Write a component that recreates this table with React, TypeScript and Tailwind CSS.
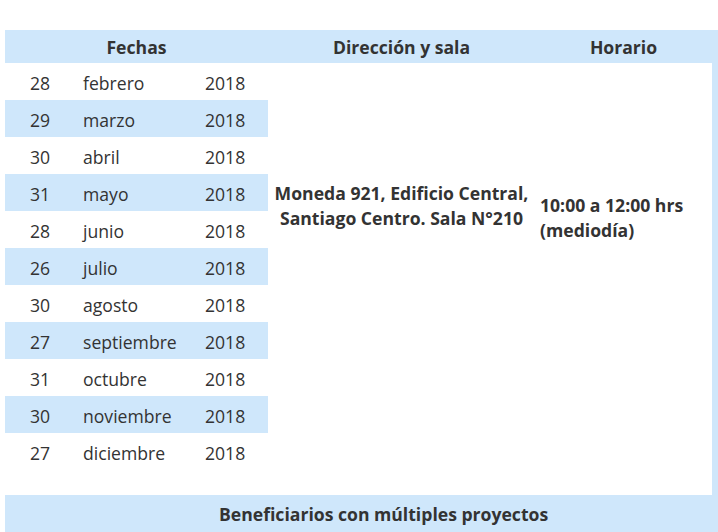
import React from 'react';

const rows = [
  { day: '28', month: 'febrero' },
  { day: '29', month: 'marzo' },
  { day: '30', month: 'abril' },
  { day: '31', month: 'mayo' },
  { day: '28', month: 'junio' },
  { day: '26', month: 'julio' },
  { day: '30', month: 'agosto' },
  { day: '27', month: 'septiembre' },
  { day: '31', month: 'octubre' },
  { day: '30', month: 'noviembre' },
  { day: '27', month: 'diciembre' },
];

export default function App() {
  return (
    <div className="w-[718px] h-[532px] overflow-hidden bg-white pt-[30px] pl-[5px] flex font-['Open_Sans',sans-serif] text-[#333] text-[17.6px]">
      <div className="w-[707px] flex flex-col">
        {/* Header */}
        <div className="grid grid-cols-[263px_267px_177px] h-[36px] bg-[#cfe7fb] font-bold items-center text-center pt-[1px]">
          <div>Fechas</div>
          <div>Dirección y sala</div>
          <div>Horario</div>
        </div>

        {/* Body */}
        <div className="grid grid-cols-[263px_267px_177px]">
          <div className="flex flex-col">
            {rows.map((r, i) => (
              <div
                key={i}
                className={`h-[37px] flex items-center pt-[2px] ${i % 2 === 1 ? 'bg-[#cfe7fb]' : ''}`}
              >
                <span className="w-[70px] text-center">{r.day}</span>
                <span className="w-[130px] pl-[8px]">{r.month}</span>
                <span>2018</span>
              </div>
            ))}
          </div>
          <div className="pt-[118px] text-center font-bold leading-[25px]">
            Moneda 921, Edificio Central,
            <br />
            Santiago Centro. Sala N°210
          </div>
          <div className="pt-[130px] pl-[5px] font-bold leading-[25px]">
            10:00 a 12:00 hrs
            <br />
            (mediodía)
          </div>
        </div>

        <div className="h-[26px]" />

        {/* Next table header */}
        <div className="h-[40px] bg-[#cfe7fb] font-bold pl-[214px] pt-[6px]">
          Beneficiarios con múltiples proyectos
        </div>
      </div>
      <div className="w-[6px] bg-[#cfe7fb]" />
    </div>
  );
}
